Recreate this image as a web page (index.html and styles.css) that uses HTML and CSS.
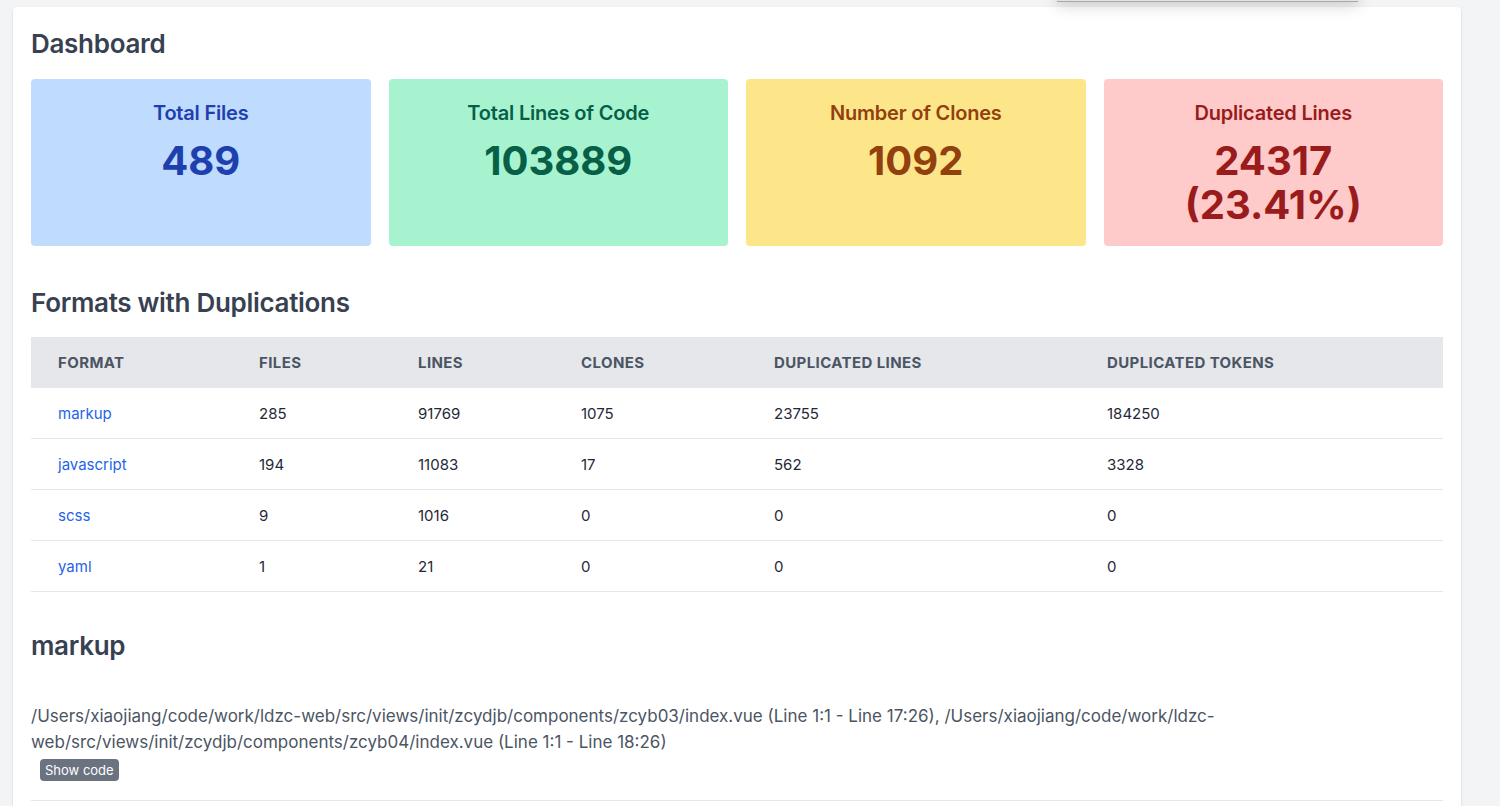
FILE: index.html
```html
<!DOCTYPE html>
<html lang="en">
<head>
<meta charset="utf-8">
<title>Dashboard</title>
<link rel="stylesheet" href="styles.css">
</head>
<body>
<div class="popover-edge"></div>
<main class="card">
  <h1 class="page-title">Dashboard</h1>
  <section class="stats">
    <div class="stat stat-blue">
      <div class="stat-label">Total Files</div>
      <div class="stat-value">489</div>
    </div>
    <div class="stat stat-green">
      <div class="stat-label">Total Lines of Code</div>
      <div class="stat-value">103889</div>
    </div>
    <div class="stat stat-yellow">
      <div class="stat-label">Number of Clones</div>
      <div class="stat-value">1092</div>
    </div>
    <div class="stat stat-red">
      <div class="stat-label">Duplicated Lines</div>
      <div class="stat-value">24317<br>(23.41%)</div>
    </div>
  </section>

  <h2 class="section-title">Formats with Duplications</h2>
  <table class="formats">
    <colgroup>
      <col class="c1"><col class="c2"><col class="c3"><col class="c4"><col class="c5"><col class="c6">
    </colgroup>
    <thead>
      <tr><th>Format</th><th>Files</th><th>Lines</th><th>Clones</th><th>Duplicated Lines</th><th>Duplicated Tokens</th></tr>
    </thead>
    <tbody>
      <tr><td><a href="#markup">markup</a></td><td>285</td><td>91769</td><td>1075</td><td>23755</td><td>184250</td></tr>
      <tr><td><a href="#javascript">javascript</a></td><td>194</td><td>11083</td><td>17</td><td>562</td><td>3328</td></tr>
      <tr><td><a href="#scss">scss</a></td><td>9</td><td>1016</td><td>0</td><td>0</td><td>0</td></tr>
      <tr><td><a href="#yaml">yaml</a></td><td>1</td><td>21</td><td>0</td><td>0</td><td>0</td></tr>
    </tbody>
  </table>

  <h2 class="section-title format-title" id="markup">markup</h2>
  <div class="clone">
    <p class="clone-files">/Users/xiaojiang/code/work/ldzc-web/src/views/init/zcydjb/components/zcyb03/index.vue (Line 1:1 - Line 17:26), /Users/xiaojiang/code/work/ldzc-web/src/views/init/zcydjb/components/zcyb04/index.vue (Line 1:1 - Line 18:26)</p>
    <button class="show-code" type="button">Show code</button>
  </div>
  <hr class="divider">
</main>
</body>
</html>
```
FILE: styles.css
```css
html, body {
  margin: 0;
  padding: 0;
}
body {
  background: #f3f4f6;
  font-family: Inter, "Noto Sans", sans-serif;
  color: #374151;
  height: 806px;
  overflow: hidden;
  position: relative;
}
.popover-edge {
  position: absolute;
  top: -60px;
  left: 1057px;
  width: 301px;
  height: 61px;
  background: #e2e2e2;
  border-bottom: 1px solid #a9a9a9;
  box-shadow: 0 4px 14px rgba(0, 0, 0, 0.16);
  z-index: 5;
}
.card {
  margin: 7px 0 0 13px;
  width: 1448px;
  box-sizing: border-box;
  background: #fff;
  border-radius: 4px;
  box-shadow: 0 1px 3px rgba(0, 0, 0, 0.1), 0 1px 2px rgba(0, 0, 0, 0.06);
  padding: 21px 18px 40px;
  min-height: 900px;
}
.page-title {
  margin: 0 0 19px;
  font-size: 26px;
  line-height: 32px;
  font-weight: 600;
  letter-spacing: -0.3px;
  color: #374151;
}
.stats {
  display: grid;
  grid-template-columns: repeat(4, 1fr);
  gap: 18px;
}
.stat {
  border-radius: 4px;
  padding: 20px 16px 19px;
  text-align: center;
}
.stat-label {
  font-size: 20px;
  line-height: 28px;
  font-weight: 600;
  letter-spacing: -0.2px;
}
.stat-value {
  margin-top: 12px;
  font-size: 40px;
  line-height: 44px;
  font-weight: 700;
}
.stat-blue { background: #bfdbfe; color: #1e40af; }
.stat-green { background: #a7f3d0; color: #065f46; }
.stat-yellow { background: #fde68a; color: #92400e; }
.stat-red { background: #fecaca; color: #991b1b; }

.section-title {
  margin: 41px 0 18px;
  font-size: 26px;
  line-height: 32px;
  font-weight: 600;
  letter-spacing: -0.3px;
  color: #374151;
}
.formats {
  width: 100%;
  border-collapse: collapse;
  table-layout: fixed;
  font-size: 15px;
}
.formats .c1 { width: 201px; }
.formats .c2 { width: 159px; }
.formats .c3 { width: 163px; }
.formats .c4 { width: 193px; }
.formats .c5 { width: 333px; }
.formats .c6 { width: 363px; }
.formats thead tr {
  background: #e5e7eb;
}
.formats th {
  height: 51px;
  padding: 0 0 0 27px;
  text-align: left;
  text-transform: uppercase;
  font-size: 15px;
  font-weight: 700;
  color: #4b5563;
  letter-spacing: 0.4px;
}
.formats td {
  height: 50px;
  padding: 0 0 0 27px;
  border-bottom: 1px solid #e5e7eb;
  color: #1f2937;
}
.formats a {
  color: #2563eb;
  text-decoration: none;
}
.format-title {
  margin-top: 38px;
  margin-bottom: 41px;
}
.clone-files {
  margin: 0;
  font-size: 17px;
  line-height: 26px;
  color: #4b5563;
}
.show-code {
  display: block;
  margin: 4px 0 0 9px;
  height: 22px;
  padding: 0 5px;
  border: 0;
  border-radius: 4px;
  background: #6b7280;
  color: #fff;
  font-family: Inter, "Noto Sans", sans-serif;
  font-size: 13px;
  line-height: 22px;
}
.divider {
  margin: 19px 0 0;
  border: 0;
  border-top: 1px solid #e5e7eb;
}
```
